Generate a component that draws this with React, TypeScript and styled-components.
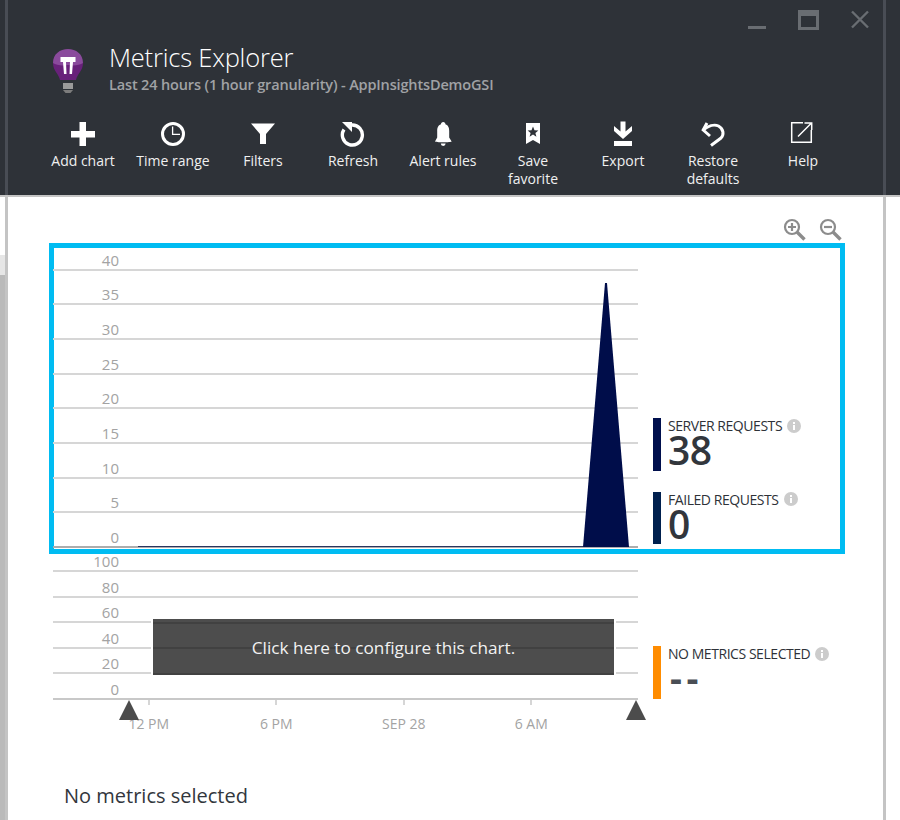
import React from 'react'
import styled, { createGlobalStyle } from 'styled-components'

const GlobalStyle = createGlobalStyle`
  html, body { margin: 0; padding: 0; background: #fff; }
  body { font-family: "Open Sans", "Liberation Sans", sans-serif; color: #32363c; }
`

const AddIcon = () => (
  <svg width="26" height="26" viewBox="0 0 26 26"><path fill="#fff" d="M9.5 1H16V10H25V16.5H16V25H9.5V16.5H1V10H9.5Z" /></svg>
)
const ClockIcon = () => (
  <svg width="26" height="26" viewBox="0 0 26 26" fill="none" stroke="#fff">
    <circle cx="13" cy="13" r="10.5" strokeWidth="3" />
    <path d="M12.6 5.5V13.4H20" strokeWidth="1.3" />
  </svg>
)
const FilterIcon = () => (
  <svg width="26" height="26" viewBox="0 0 26 26"><path fill="#fff" d="M1 2.5H25L16 13V23H10V13Z" /></svg>
)
const RefreshIcon = () => (
  <svg width="26" height="26" viewBox="0 0 26 26" fill="none">
    <path d="M12 4A10 10 0 1 1 4 8.5" stroke="#fff" strokeWidth="3.4" />
    <path d="M2 1H12V11Z" fill="#fff" />
  </svg>
)
const BellIcon = () => (
  <svg width="26" height="26" viewBox="0 0 26 26" fill="#fff">
    <path d="M13.2 1C14.6 1 15.4 2 15.4 3.2C18.4 4.2 19.2 7 19.2 10V16.5L21.6 20.5C21.6 21.6 5 21.6 5 20.5L7.2 16.5V10C7.2 7 8 4.2 11 3.2C11 2 11.8 1 13.2 1Z" />
    <path d="M10.8 22.5H15.6A2.4 2.4 0 0 1 10.8 22.5Z" />
  </svg>
)
const BookmarkIcon = () => (
  <svg width="26" height="26" viewBox="0 0 26 26">
    <path fill="#fff" d="M6 2H20V23L13 19L6 23Z" />
    <path fill="#2e3238" d="M13 5.5L14.5 9.2L18.4 9.4L15.4 11.9L16.4 15.7L13 13.6L9.6 15.7L10.6 11.9L7.6 9.4L11.5 9.2Z" />
  </svg>
)
const ExportIcon = () => (
  <svg width="26" height="26" viewBox="0 0 26 26" fill="#fff">
    <path d="M10.5 0.5H15.5V10.5L22 5V10L13 18L4 10V5L10.5 10.5Z" />
    <rect x="4" y="20" width="18" height="5" />
  </svg>
)
const RestoreIcon = () => (
  <svg width="26" height="26" viewBox="0 0 26 26" fill="none" stroke="#fff" strokeWidth="3">
    <path d="M7 2L3.2 9L10 15" />
    <path d="M3.5 9C8 5 14 3 18.5 5C24 8 24 14 21 17L11 24.5" />
  </svg>
)
const HelpIcon = () => (
  <svg width="26" height="26" viewBox="0 0 26 26" fill="none" stroke="#fff" strokeWidth="1.5">
    <path d="M13 1.7H1.7V21.3H21.3V9" />
    <path d="M8 15.5L21 2.5M14.5 2H21.7V9" />
  </svg>
)

const BulbIcon = () => (
  <svg width="32" height="48" viewBox="0 0 32 48">
    <path fill="#68217a" d="M1 16C1 24 7 27 8 33H24C25 27 31 24 31 16Z" />
    <path fill="#8a4a9c" d="M1 16C1 7 8 2 16 2C24 2 31 7 31 16C28 18 22 19 16 18C10 19 4 18 1 16Z" />
    <path fill="#fff" d="M8.5 10H23.5V15H21L20 27H17.5L18 15H14L14.5 27H12L11 15H8.5Z" />
    <rect x="11" y="36" width="10" height="6" fill="#9a9a9a" />
    <path fill="#7c7c7c" d="M11 43H21L18.5 46H13.5Z" />
  </svg>
)

const ZoomInIcon = () => (
  <svg width="24" height="24" viewBox="0 0 24 24" fill="none" stroke="#8c8c8c">
    <circle cx="9" cy="9" r="7" strokeWidth="2.2" />
    <path d="M14 14L21.5 21.5" strokeWidth="3.4" />
    <path d="M5 9H13M9 5V13" strokeWidth="2.2" />
  </svg>
)
const ZoomOutIcon = () => (
  <svg width="24" height="24" viewBox="0 0 24 24" fill="none" stroke="#8c8c8c">
    <circle cx="9" cy="9" r="7" strokeWidth="2.2" />
    <path d="M14 14L21.5 21.5" strokeWidth="3.4" />
    <path d="M5 9H13" strokeWidth="2.2" />
  </svg>
)

const InfoIcon = () => (
  <svg width="14" height="14" viewBox="0 0 14 14">
    <circle cx="7" cy="7" r="7" fill="#cccccc" />
    <rect x="6" y="6" width="2" height="5" fill="#fff" />
    <rect x="6" y="3" width="2" height="2" fill="#fff" />
  </svg>
)

const commands = [
  { icon: <AddIcon />, label: 'Add chart' },
  { icon: <ClockIcon />, label: 'Time range' },
  { icon: <FilterIcon />, label: 'Filters' },
  { icon: <RefreshIcon />, label: 'Refresh' },
  { icon: <BellIcon />, label: 'Alert rules' },
  { icon: <BookmarkIcon />, label: 'Save favorite' },
  { icon: <ExportIcon />, label: 'Export' },
  { icon: <RestoreIcon />, label: 'Restore defaults' },
  { icon: <HelpIcon />, label: 'Help' },
]

const requestRows = ['40', '35', '30', '25', '20', '15', '10', '5', '0']
const configRows = ['100', '80', '60', '40', '20', '0']
const ticks = ['12 PM', '6 PM', 'SEP 28', '6 AM']

const App = () => {
  return (
    <Page>
      <GlobalStyle />
      <Rail $width="5px">
        <RailTop />
        <RailGap />
        <RailTab />
        <RailShade />
      </Rail>
      <Blade>
        <Header>
          <WindowControls>
            <svg width="18" height="20" viewBox="0 0 18 20"><rect y="16" width="18" height="3" fill="#696d72" /></svg>
            <svg width="21" height="20" viewBox="0 0 21 20"><path fill="#696d72" d="M0 0H21V20H0ZM3 6V17H18V6Z" fillRule="evenodd" /></svg>
            <svg width="18" height="20" viewBox="0 0 18 20" fill="none" stroke="#696d72" strokeWidth="2.4"><path d="M1 1.5L17 17.5M17 1.5L1 17.5" /></svg>
          </WindowControls>
          <TitleRow>
            <BulbIcon />
            <TitleText>
              <Title>Metrics Explorer</Title>
              <Subtitle>Last 24 hours (1 hour granularity) - AppInsightsDemoGSI</Subtitle>
            </TitleText>
          </TitleRow>
          <CommandBar>
            {commands.map((c) => (
              <Command key={c.label}>
                {c.icon}
                <CommandLabel>{c.label}</CommandLabel>
              </Command>
            ))}
          </CommandBar>
        </Header>
        <Body>
          <ZoomBar>
            <ZoomInIcon />
            <ZoomOutIcon />
          </ZoomBar>
          <SelectedFrame>
            <ChartRow>
              <Plot>
                {requestRows.map((label, i) => (
                  <GridRow
                    key={label}
                    $height={i === 0 ? 22.5 : 34.7}
                    $line={i === requestRows.length - 1 ? '#adadad' : '#d6d6d6'}
                  >
                    <YLabel>{label}</YLabel>
                  </GridRow>
                ))}
                <BaseLine />
                <Peak viewBox="0 0 46 264" preserveAspectRatio="none">
                  <path fill="#000d4a" d="M0 264L22 0H24L46 264Z" />
                </Peak>
              </Plot>
              <Legend $bottom={4}>
                <LegendItem $color="#000f4d">
                  <LegendName>SERVER REQUESTS <InfoIcon /></LegendName>
                  <LegendValue>38</LegendValue>
                </LegendItem>
                <LegendItem $color="#00204e">
                  <LegendName>FAILED REQUESTS <InfoIcon /></LegendName>
                  <LegendValue>0</LegendValue>
                </LegendItem>
              </Legend>
            </ChartRow>
          </SelectedFrame>
          <ConfigChart>
            <ChartRow>
              <Plot>
                {configRows.map((label, i) => (
                  <GridRow
                    key={label}
                    $height={i === 0 ? 18 : 25.5}
                    $line={i === configRows.length - 1 ? '#c8c8c8' : '#d6d6d6'}
                  >
                    <YLabel>{label}</YLabel>
                  </GridRow>
                ))}
                <ConfigOverlay>Click here to configure this chart.</ConfigOverlay>
              </Plot>
              <Legend $bottom={1}>
                <LegendItem $color="#ff8c00">
                  <LegendName>NO METRICS SELECTED <InfoIcon /></LegendName>
                  <LegendDashes>--</LegendDashes>
                </LegendItem>
              </Legend>
            </ChartRow>
            <Axis>
              {ticks.map((t) => (
                <TickCell key={t}>
                  <Tick />
                  <TickLabel>{t}</TickLabel>
                </TickCell>
              ))}
              <RangeHandle $left={66} />
              <RangeHandle $left={573} />
            </Axis>
          </ConfigChart>
          <EmptyNote>No metrics selected</EmptyNote>
        </Body>
      </Blade>
      <Rail $width="14px">
        <RailTop />
      </Rail>
    </Page>
  )
}

export default App

const Page = styled.div`
  display: flex;
  width: 900px;
  height: 820px;
  overflow: hidden;
  background: #fff;
`
const Rail = styled.div<{ $width: string }>`
  width: ${(p) => p.$width};
  flex: none;
  display: flex;
  flex-direction: column;
`
const RailTop = styled.div`
  height: 195px;
  flex: none;
  background: #2e3238;
  border-bottom: 2px solid #c4c4c4;
`
const RailGap = styled.div`
  height: 58px;
  flex: none;
  background: #fff;
`
const RailTab = styled.div`
  height: 20px;
  flex: none;
  background: #e6e6e6;
`
const RailShade = styled.div`
  flex: 1;
  background: #bababa;
`
const Blade = styled.div`
  width: 881px;
  flex: none;
  display: flex;
  flex-direction: column;
`
const Header = styled.div`
  height: 195px;
  box-sizing: border-box;
  flex: none;
  background: #2e3238;
  border-left: 3px solid #494d55;
  border-right: 3px solid #494d55;
  display: flex;
  flex-direction: column;
`
const WindowControls = styled.div`
  display: flex;
  justify-content: flex-end;
  gap: 32px;
  padding: 10px 14px 0 0;
`
const TitleRow = styled.div`
  display: flex;
  align-items: flex-start;
  margin: 17px 0 0 44px;
  gap: 25px;
`
const TitleText = styled.div`
  display: flex;
  flex-direction: column;
`
const Title = styled.div`
  font-size: 25.5px;
  line-height: 30px;
  font-weight: 300;
  color: #fff;
  letter-spacing: -0.2px;
  margin-top: -5px;
`
const Subtitle = styled.div`
  margin-top: 3px;
  font-size: 14.5px;
  line-height: 20px;
  font-weight: 600;
  color: #a0a2a5;
  letter-spacing: -0.15px;
`
const CommandBar = styled.div`
  display: flex;
  margin: 26px 0 0 30px;
`
const Command = styled.div`
  width: 90px;
  flex: none;
  display: flex;
  flex-direction: column;
  align-items: center;
`
const CommandLabel = styled.div`
  margin-top: 5px;
  font-size: 14px;
  line-height: 18px;
  color: #f0f0f0;
  text-align: center;
  width: 80px;
`
const Body = styled.div`
  flex: 1;
  background: #fff;
  border-top: 2px solid #c4c4c4;
  border-left: 3px solid #c4c4c4;
  border-right: 3px solid #c4c4c4;
  display: flex;
  flex-direction: column;
  padding-left: 41px;
`
const ZoomBar = styled.div`
  display: flex;
  justify-content: flex-end;
  gap: 12px;
  width: 794px;
  height: 46px;
  box-sizing: border-box;
  padding-top: 21px;
`
const SelectedFrame = styled.div`
  width: 796px;
  height: 311px;
  box-sizing: border-box;
  border: 5px solid #00bcf2;
`
const ChartRow = styled.div`
  display: flex;
  margin-left: -1px;
`
const Plot = styled.div`
  position: relative;
  width: 585px;
  flex: none;
`
const GridRow = styled.div<{ $height: number; $line: string }>`
  height: ${(p) => p.$height}px;
  box-sizing: border-box;
  border-bottom: 2px solid ${(p) => p.$line};
  display: flex;
  align-items: flex-end;
`
const YLabel = styled.span`
  width: 66px;
  text-align: right;
  font-size: 15px;
  line-height: 18px;
  color: #a3a3a3;
`
const BaseLine = styled.div`
  position: absolute;
  left: 85px;
  width: 445px;
  bottom: 1px;
  height: 1px;
  background: #2a3560;
`
const Peak = styled.svg`
  position: absolute;
  left: 530px;
  bottom: 1px;
  width: 46px;
  height: 264px;
`
const Legend = styled.div<{ $bottom: number }>`
  display: flex;
  flex-direction: column;
  justify-content: flex-end;
  gap: 21px;
  margin-left: 15px;
  padding-bottom: ${(p) => p.$bottom}px;
`
const LegendItem = styled.div<{ $color: string }>`
  height: 52.5px;
  box-sizing: border-box;
  border-left: 8px solid ${(p) => p.$color};
  padding-left: 7px;
  display: flex;
  flex-direction: column;
`
const LegendName = styled.div`
  display: flex;
  align-items: center;
  gap: 2px;
  font-size: 14px;
  line-height: 15px;
  height: 15px;
  font-weight: 500;
  color: #2e3238;
  letter-spacing: -0.45px;
  white-space: pre;
`
const LegendValue = styled.div`
  font-size: 39px;
  line-height: 33px;
  font-weight: 600;
  color: #32363c;
  letter-spacing: -0.5px;
`
const LegendDashes = styled.div`
  padding-left: 2px;
  font-size: 37px;
  line-height: 33px;
  font-weight: 700;
  color: #4a4e55;
  letter-spacing: 4.5px;
`
const ConfigChart = styled.div`
  width: 796px;
  padding-left: 5px;
  box-sizing: border-box;
`
const ConfigOverlay = styled.div`
  position: absolute;
  left: 100px;
  top: 65px;
  width: 461px;
  height: 56px;
  display: flex;
  align-items: center;
  justify-content: center;
  outline: 2px solid #fff;
  font-size: 17.2px;
  color: #f2f2f2;
  background:
    linear-gradient(#414141, #414141) 0 3px / 100% 2px no-repeat,
    linear-gradient(#414141, #414141) 0 28px / 100% 2px no-repeat,
    linear-gradient(#414141, #414141) 0 54px / 100% 2px no-repeat,
    #4d4d4d;
`
const Axis = styled.div`
  position: relative;
  display: grid;
  grid-template-columns: repeat(4, 127.5px);
  width: 585px;
  height: 40px;
  margin-left: -1px;
  padding-left: 32px;
`
const TickCell = styled.div`
  display: flex;
  flex-direction: column;
  align-items: center;
`
const Tick = styled.div`
  width: 2px;
  height: 5px;
  background: #d6d6d6;
`
const TickLabel = styled.div`
  margin-top: 10px;
  font-size: 14px;
  line-height: 18px;
  color: #a3a3a3;
`
const RangeHandle = styled.div<{ $left: number }>`
  position: absolute;
  top: 0;
  left: ${(p) => p.$left}px;
  width: 0;
  height: 0;
  border-left: 10.5px solid transparent;
  border-right: 10.5px solid transparent;
  border-bottom: 20px solid #4c4c4c;
`
const EmptyNote = styled.div`
  margin: 42.5px 0 0 15px;
  font-size: 20px;
  line-height: 28px;
  color: #32363c;
`
